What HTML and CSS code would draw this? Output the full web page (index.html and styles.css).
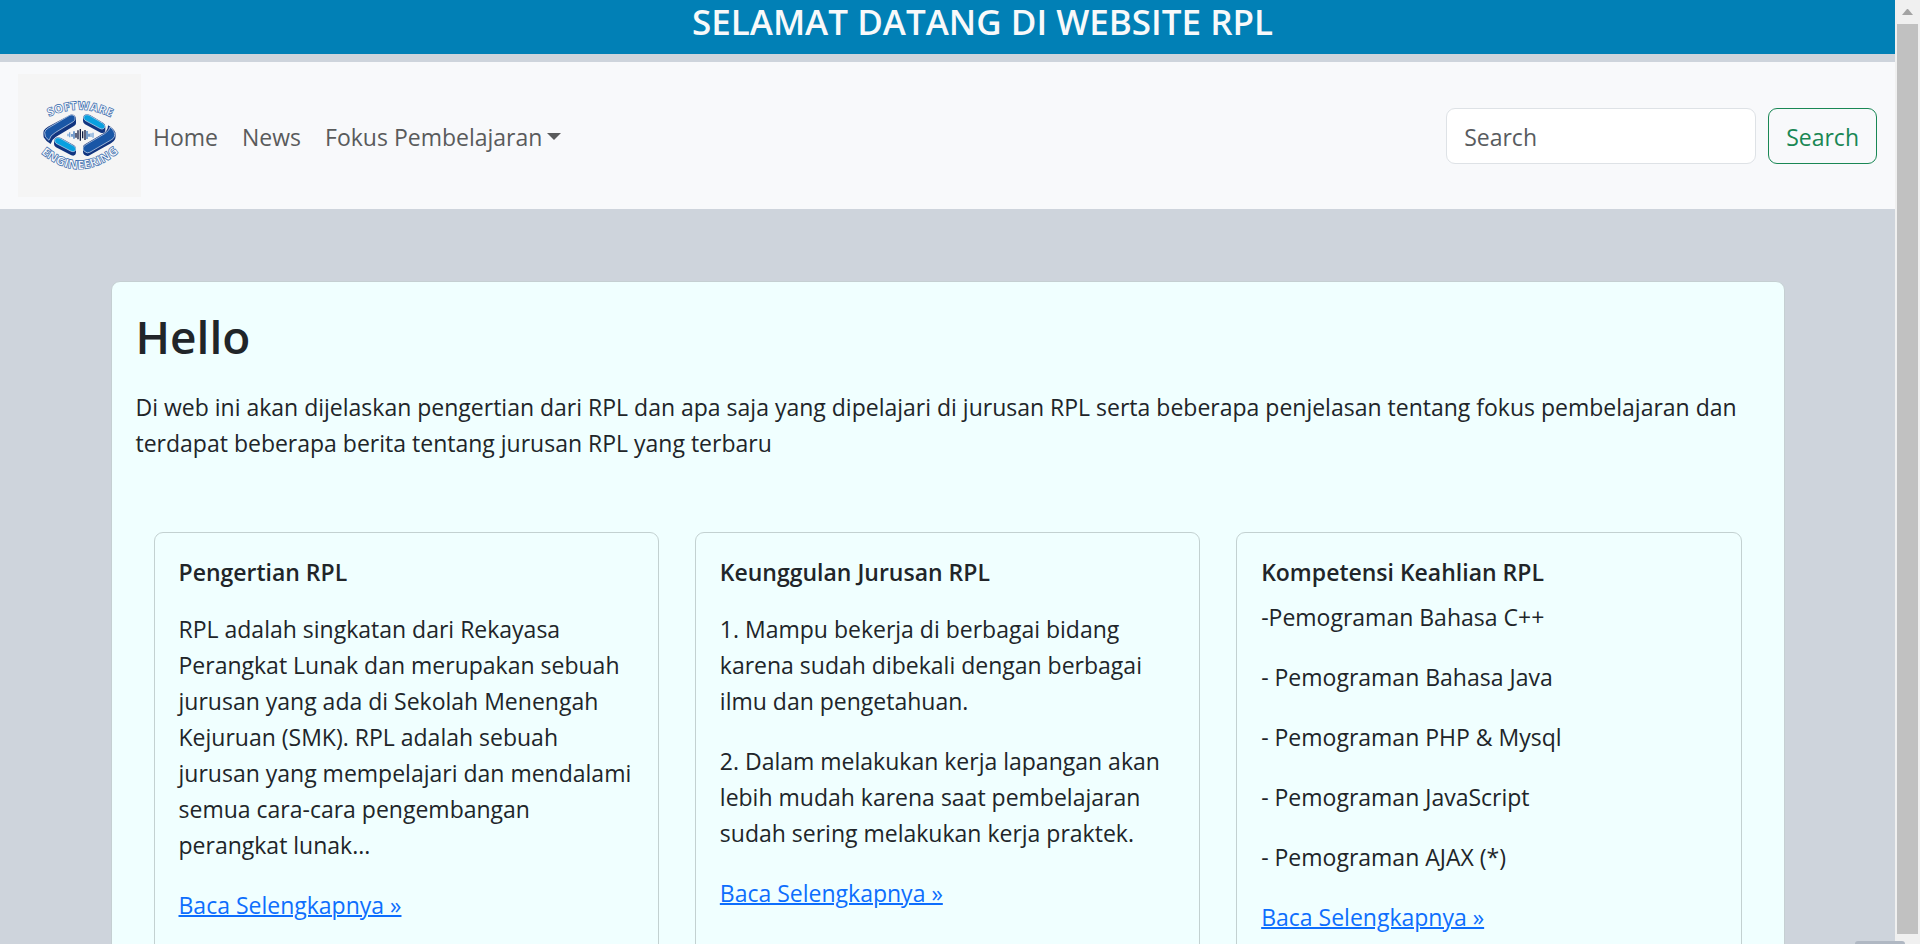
FILE: index.html
```html
<!DOCTYPE html>
<html lang="id">
<head>
<meta charset="utf-8">
<meta name="viewport" content="width=device-width, initial-scale=1">
<title>Website RPL</title>
<link rel="stylesheet" href="styles.css">
</head>
<body>
<div class="page">
  <header class="banner">SELAMAT DATANG DI WEBSITE RPL</header>

  <nav class="navbar">
    <a class="brand" href="#" aria-label="Software Engineering">
      <svg class="logo" viewBox="0 0 369 369" aria-hidden="true">
        <defs>
          <path id="arc-top" d="M90 130 Q186 84 282 132"/>
          <path id="arc-bottom" d="M62 232 Q184 340 309 230"/>
        </defs>
        <rect width="369" height="369" fill="#f5f5f5"/>
        <g class="logo-text">
          <text class="logo-top"><textPath href="#arc-top" startOffset="50%">SOFTWARE</textPath></text>
          <text class="logo-bottom"><textPath href="#arc-bottom" startOffset="50%">ENGINEERING</textPath></text>
        </g>
        <g fill="#11347f">
          <path d="M157 122C165 119 174 125 174 133V148Q174 153 168 156L113 189Q102 196 98 210Q82 200 77 190Q75 174 78 169Q82 163 90 158Z"/>
          <path d="M212 245C204 248 195 242 195 234V220Q195 214 201 211L258 177Q270 169 270 154Q286 163 292 175Q294 190 291 196Q288 203 279 208Z"/>
          <path d="M195 133C195 122 206 117 216 123L255 146Q263 151 262 158V168Q261 180 248 176L201 151Q195 147 195 141Z"/>
          <path d="M108 202C108 191 119 186 129 192L168 214Q175 219 174 226V235Q173 248 160 244L114 220Q108 216 108 210Z"/>
        </g>
        <g stroke="#dce9f5" stroke-width="2">
          <path fill="#1956a6" d="M155 124C170 118 177 135 166 143L113 175Q96 184 93 199Q78 190 80 175Q81 168 91 162Z"/>
          <path fill="#1956a6" d="M201 233C191 227 195 217 204 212L260 179Q276 168 276 159Q294 174 289 188Q286 195 279 198L215 235Q207 239 201 233Z"/>
          <path fill="#09a0df" d="M201 139C191 129 202 118 214 124L253 147C268 156 258 170 245 163Z"/>
          <path fill="#09a0df" d="M114 208C104 198 115 187 127 193L166 215C181 224 171 238 158 231Z"/>
        </g>
        <g fill="none" stroke-width="4">
          <path stroke="#78a6d8" d="M150 179v8M155 175v15M219 178v11M225 176v15"/>
          <path stroke="#356fb6" d="M162 180v8M168 172v22M207 171v24M213 179v9"/>
          <path stroke="#111c43" d="M174 177v14M180 169v27M187 165v35M194 172v21M201 168v30"/>
        </g>
      </svg>
    </a>
    <div class="menu">
      <a class="menu-link" href="#">Home</a>
      <a class="menu-link" href="#">News</a>
      <a class="menu-link menu-drop" href="#">Fokus Pembelajaran</a>
    </div>
    <form class="search" role="search">
      <input class="search-input" type="search" placeholder="Search" aria-label="Search">
      <button class="search-button" type="button">Search</button>
    </form>
  </nav>

  <main class="panel">
    <h1 class="panel-title">Hello</h1>
    <p class="text">Di web ini akan dijelaskan pengertian dari RPL dan apa saja yang dipelajari di jurusan RPL serta beberapa penjelasan tentang fokus pembelajaran dan terdapat beberapa berita tentang jurusan RPL yang terbaru</p>
    <div class="cards">
      <section class="card">
        <h2 class="card-title">Pengertian RPL</h2>
        <div class="card-body">
          <p class="text">RPL adalah singkatan dari Rekayasa Perangkat Lunak dan merupakan sebuah jurusan yang ada di Sekolah Menengah Kejuruan (SMK). RPL adalah sebuah jurusan yang mempelajari dan mendalami semua cara-cara pengembangan perangkat lunak...</p>
          <a class="more" href="#">Baca Selengkapnya »</a>
        </div>
      </section>
      <section class="card">
        <h2 class="card-title">Keunggulan Jurusan RPL</h2>
        <div class="card-body">
          <p class="text">1. Mampu bekerja di berbagai bidang karena sudah dibekali dengan berbagai ilmu dan pengetahuan.</p>
          <p class="text">2. Dalam melakukan kerja lapangan akan lebih mudah karena saat pembelajaran sudah sering melakukan kerja praktek.</p>
          <a class="more" href="#">Baca Selengkapnya »</a>
        </div>
      </section>
      <section class="card card-compact">
        <h2 class="card-title">Kompetensi Keahlian RPL</h2>
        <div class="card-body">
          <p class="text">-Pemograman Bahasa C++</p>
          <p class="text">- Pemograman Bahasa Java</p>
          <p class="text">- Pemograman PHP &amp; Mysql</p>
          <p class="text">- Pemograman JavaScript</p>
          <p class="text">- Pemograman AJAX (*)</p>
          <a class="more" href="#">Baca Selengkapnya »</a>
        </div>
      </section>
    </div>
  </main>
</div>
<div class="scrollbar" aria-hidden="true">
  <svg class="scroll-arrow" viewBox="0 0 11 6"><path d="M0 6L5 0H6L11 6Z" fill="#a3a3a3"/></svg>
  <div class="scroll-thumb"></div>
</div>
<div class="corner-tab" aria-hidden="true"></div>
</body>
</html>
```
FILE: styles.css
```css
* {
  box-sizing: border-box;
}

body {
  margin: 0;
  height: 100vh;
  display: flex;
  overflow: hidden;
  background: #ced4dc;
  color: #212529;
  font-family: "Open Sans", "Noto Sans", sans-serif;
  font-size: 23px;
  font-weight: 400;
  line-height: 36px;
}

h1,
h2,
p {
  margin: 0;
}

.page {
  flex: 1;
  min-width: 0;
  overflow: hidden;
}

.banner {
  height: 54px;
  margin-bottom: 8px;
  padding-left: 70px;
  background: #0180b6;
  color: #f8f9fa;
  font-size: 35px;
  font-weight: 600;
  line-height: 44px;
  text-align: center;
  white-space: nowrap;
}

.navbar {
  display: flex;
  align-items: center;
  padding: 12px 18px;
  background: #f8f9fb;
}

.brand {
  display: block;
}

.logo {
  display: block;
  width: 123px;
  height: 123px;
}

.logo-text {
  fill: #f5f8fc;
  stroke: #3468ab;
  stroke-width: 2px;
  font-family: "Open Sans", sans-serif;
  font-weight: 800;
  text-anchor: middle;
}

.logo-top {
  font-size: 35px;
}

.logo-bottom {
  font-size: 37px;
}

.menu {
  display: flex;
  flex: 1;
}

.menu-link {
  display: flex;
  align-items: center;
  padding: 14px 12px 12px;
  color: #5a5b5c;
  text-decoration: none;
}

.menu-drop::after {
  content: "";
  margin-left: 5px;
  border-top: 7px solid;
  border-right: 7px solid transparent;
  border-left: 7px solid transparent;
}

.search {
  display: flex;
  gap: 12px;
}

.search-input,
.search-button {
  height: 56px;
  padding: 2px 17px 0;
  border: 1px solid #dee2e6;
  border-radius: 9px;
  font: inherit;
}

.search-input {
  width: 310px;
  background: #fff;
  color: #212529;
}

.search-input::placeholder {
  color: #595c5f;
  opacity: 1;
}

.search-button {
  border-color: #198754;
  background: transparent;
  color: #198754;
}

.panel {
  max-width: 1674px;
  margin: 72px auto;
  padding: 25px 24px 24px;
  border: 1px solid #c5cfd2;
  border-radius: 9px;
  background: #f0ffff;
}

.panel-title {
  margin-bottom: 24px;
  font-size: 46px;
  font-weight: 600;
  line-height: 58px;
}

.cards {
  display: grid;
  grid-template-columns: repeat(3, 1fr);
  gap: 36px;
  padding: 71px 18px 18px;
}

.card {
  display: flex;
  flex-direction: column;
  gap: 24px;
  padding: 25px 24px 24px;
  border: 1px solid #c3d1d1;
  border-radius: 9px;
}

.card-compact {
  gap: 12px;
}

.card-title {
  font-size: 23px;
  font-weight: 600;
  line-height: 29px;
}

.card-body {
  display: flex;
  flex-direction: column;
  align-items: flex-start;
  gap: 24px;
}

.more {
  color: #0d6efd;
  text-decoration-thickness: 2px;
}

.scrollbar {
  display: flex;
  flex-direction: column;
  align-items: center;
  width: 25px;
  padding: 9px 2px 10px;
  background: #f0f0f0;
}

.scroll-arrow {
  width: 11px;
  height: 6px;
  margin-bottom: 9px;
}

.scroll-thumb {
  flex: 1;
  width: 100%;
  background: #c1c1c1;
}

.corner-tab {
  position: absolute;
  right: 15px;
  bottom: 0;
  width: 50px;
  height: 3px;
  border-radius: 8px 8px 0 0;
  background: #b0b8c3;
}
```
